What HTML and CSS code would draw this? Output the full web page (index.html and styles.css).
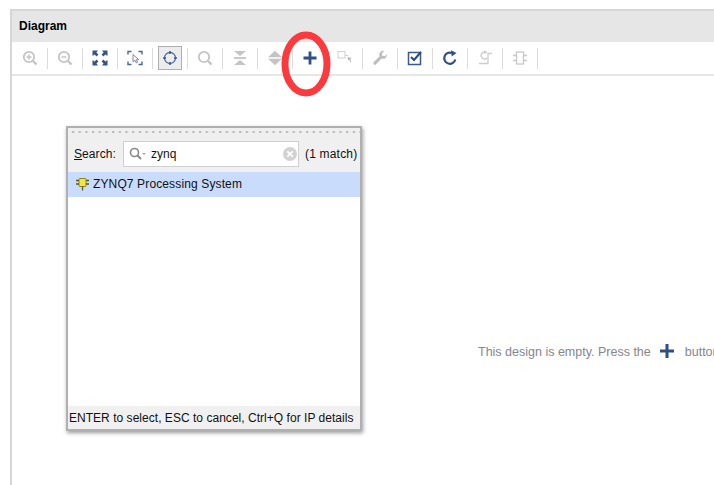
FILE: index.html
```html
<!DOCTYPE html>
<html lang="en">
<head>
<meta charset="utf-8">
<title>Diagram</title>
<link rel="stylesheet" href="styles.css">
</head>
<body>
<main class="panel">
  <header class="title">Diagram</header>
  <div class="toolbar">
    <span class="tool"><svg class="ico" viewBox="0 0 16 16"><circle cx="7" cy="7" r="5.2" fill="none" stroke="#c4c4c4" stroke-width="1.8"/><path d="M4.5 7h5M7 4.5v5" stroke="#c4c4c4" stroke-width="1.5"/><path d="M11 11l3.5 3.5" stroke="#c4c4c4" stroke-width="2.4"/></svg></span>
    <span class="tool"><svg class="ico" viewBox="0 0 16 16"><circle cx="7" cy="7" r="5.2" fill="none" stroke="#c4c4c4" stroke-width="1.8"/><path d="M4.5 7h5" stroke="#c4c4c4" stroke-width="1.5"/><path d="M11 11l3.5 3.5" stroke="#c4c4c4" stroke-width="2.4"/></svg></span>
    <span class="tool"><svg class="ico" viewBox="0 0 16 16"><path d="M.5.500h5.500L4.400 2.600 6.400 4.600 4.600 6.400 2.600 4.400 .5 6zM15.500.500V6L13.400 4.400 11.400 6.400 9.600 4.600 11.600 2.600 10 .5zM.5 15.500V10L2.600 11.600 4.600 9.600 6.400 11.400 4.400 13.400 6 15.500zM15.500 15.500H10L11.600 13.400 9.600 11.400 11.400 9.600 13.400 11.600 15.500 10z" fill="#355585"/></svg></span>
    <span class="tool"><svg class="ico" viewBox="0 0 16 16"><path d="M1 4.500V1.500h3.500M11.500 1.500H15v3M15 11.500v3h-3.500M4.500 14.500H1v-3" fill="none" stroke="#4a6794" stroke-width="1.400"/><path d="M6 4.500v7.500l2-1.800 1.400 2.800 1.200-.6-1.300-2.700h2.500z" fill="#fff" stroke="#7c8ca6"/></svg></span>
    <span class="tool on"><svg class="ico" viewBox="0 0 16 16"><circle cx="8" cy="8" r="5.500" fill="none" stroke="#4a6c9e" stroke-width="1.300"/><path d="M8 1v3M8 12v3M1 8h3M12 8h3" stroke="#3b5a8c" stroke-width="1.500"/></svg></span>
    <span class="tool"><svg class="ico" viewBox="0 0 16 16"><circle cx="7" cy="7" r="5.200" fill="none" stroke="#c4c4c4" stroke-width="1.800"/><path d="M11 11l3.500 3.500" stroke="#c4c4c4" stroke-width="2.400"/></svg></span>
    <span class="tool"><svg class="ico" viewBox="0 0 16 16"><path d="M2 7.500h12M2 8.500h12" stroke="#c8c8c8"/><path d="M2 1h12L8 6zM2 15h12L8 10z" fill="#c4c4c4"/></svg></span>
    <span class="tool"><svg class="ico" viewBox="0 0 16 16"><path d="M1 7.200L8 .8l7 6.400zM1 8.800h14l-7 6.400z" fill="#c4c4c4"/></svg></span>
    <span class="tool"><svg class="ico" viewBox="0 0 16 16"><path d="M8 1.500v13M1.500 8h13" stroke="#2f4f85" stroke-width="2.800"/></svg></span>
    <span class="tool"><svg class="ico" viewBox="0 0 16 16"><rect x="1" y="1.500" width="7" height="6.500" fill="#fff" stroke="#cfcfcf"/><path d="M8 5.500h3" stroke="#cfcfcf"/><path d="M10.500 7l4 1-1.200 1.200 1 2.800-1 .2-1-2.800-1.300.8z" fill="#b4b4b4"/></svg></span>
    <span class="tool"><svg class="ico" viewBox="0 0 16 16"><path d="M15 4.200a4 4 0 0 1-5.400 4.300L4 14.200a1.500 1.500 0 0 1-2.200-2.200l5.700-5.600A4 4 0 0 1 12.200 1L9.800 3.400l.5 2.300 2.300.5z" fill="#bdbdbd"/></svg></span>
    <span class="tool"><svg class="ico" viewBox="0 0 16 16"><path d="M1.500 2.500h12v12h-12z" fill="none" stroke="#3b5a8c" stroke-width="1.500"/><path d="M4 7l3 3 7-8" fill="none" stroke="#2a4a7c" stroke-width="2"/></svg></span>
    <span class="tool"><svg class="ico" viewBox="0 0 16 16"><path d="M13.300 9.500A5.600 5.600 0 1 1 10 3" fill="none" stroke="#2f5080" stroke-width="2.200"/><path d="M9 .3l5.500 2.700-4.800 3.500z" fill="#2f5080"/></svg></span>
    <span class="tool"><svg class="ico" viewBox="0 0 16 16"><path d="M10 8a3.500 3.500 0 1 1-2-6" fill="none" stroke="#cdcdcd" stroke-width="1.500"/><path d="M7 .2l3.500 1.800-3 2.200z" fill="#cdcdcd"/><path d="M2 13.500h9V3.500h4" fill="none" stroke="#cdcdcd" stroke-width="1.300"/></svg></span>
    <span class="tool"><svg class="ico" viewBox="0 0 16 16"><rect x="4.500" y="2" width="7" height="12" fill="#fff" stroke="#c8c8c8" stroke-width="1.300"/><path d="M1 5.500h3.500M1 10.500h3.500M11.500 5.500H15M11.500 10.500H15" stroke="#c8c8c8" stroke-width="1.300"/></svg></span>
  </div>
  <section class="canvas">
    <p class="hint">This design is empty. Press the
      <svg class="hint-plus" viewBox="0 0 16 16"><path d="M8 1v14M1 8h14" stroke="#2f4f85" stroke-width="3"/></svg>
      button</p>
  </section>
</main>

<aside class="popup">
  <div class="grip"></div>
  <div class="search">
    <label class="search-label"><u>S</u>earch:</label>
    <div class="field">
      <svg class="field-ico" viewBox="0 0 18 14"><circle cx="5.500" cy="5.500" r="4" fill="none" stroke="#8a8a8a" stroke-width="1.600"/><path d="M8.500 8.500l3.500 3.500" stroke="#8a8a8a" stroke-width="2"/><path d="M13 6h4l-2 2z" fill="#a8a8a8"/></svg>
      <span class="query">zynq</span>
      <svg class="clear" viewBox="0 0 14 14"><circle cx="7" cy="7" r="7" fill="#d2d2d2"/><path d="M4.300 4.300l5.400 5.400M9.700 4.300l-5.400 5.400" stroke="#fff" stroke-width="1.800"/></svg>
    </div>
    <span class="count">(1 match)</span>
  </div>
  <div class="list">
    <div class="row">
      <svg class="chip" viewBox="0 0 14 14"><rect x="4" y="1.500" width="7" height="8" rx="1" fill="#f5e63c" stroke="#8a8420"/><path d="M1 3.500h3M1 7h3M11 3.500h3M11 7h3M7.500 9.500v4" stroke="#5e5a20" stroke-width="1.300"/></svg>
      <span class="row-name">ZYNQ7 Processing System</span>
    </div>
  </div>
  <footer class="foot">ENTER to select, ESC to cancel, Ctrl+Q for IP details</footer>
</aside>

<svg class="mark" viewBox="0 0 50 66"><ellipse cx="25" cy="33" rx="21" ry="29" fill="none" stroke="#fb3a3e" stroke-width="7"/></svg>
</body>
</html>
```

FILE: styles.css
```css
html, body {
  margin: 0;
  height: 100%;
  overflow: hidden;
  background: #fff;
}
body {
  font-family: "Liberation Sans", Arial, sans-serif;
  font-size: 12px;
  color: #111;
  padding: 9px 0 0 10px;
  box-sizing: border-box;
}
.panel {
  height: 100%;
  display: flex;
  flex-direction: column;
  border-left: 2px solid #d6d6d6;
  border-top: 2px solid #d6d6d6;
}
.title {
  height: 29px;
  flex: none;
  display: flex;
  align-items: center;
  padding: 0 0 2px 7px;
  background: #e6e6e6;
  font-weight: bold;
  color: #000;
}
.toolbar {
  height: 32px;
  flex: none;
  display: flex;
  align-items: center;
  padding-left: 1px;
  border-bottom: 2px solid #e6e6e6;
}
.tool {
  width: 34px;
  height: 21px;
  flex: none;
  display: flex;
  align-items: center;
  justify-content: center;
  border-right: 1px solid #dcdcdc;
}
.tool.on {
  position: relative;
}
.tool.on::before {
  content: "";
  position: absolute;
  left: 5px;
  top: -2px;
  width: 22px;
  height: 22px;
  border: 1px solid #b0b0b0;
  background: #ececec;
}
.ico {
  width: 16px;
  height: 16px;
  position: relative;
}
.canvas {
  flex: 1;
  display: flex;
  align-items: flex-start;
  padding: 268px 0 0 466px;
  min-width: 0;
  overflow: hidden;
}
.hint {
  margin: 0;
  white-space: nowrap;
  font-size: 12.5px;
  color: #85858f;
  display: flex;
  align-items: center;
  gap: 8px;
  height: 16px;
}
.hint-plus {
  width: 16px;
  height: 16px;
  margin: -2px 2px 0 0;
}
.popup {
  position: absolute;
  left: 66px;
  top: 126px;
  width: 292px;
  height: 301px;
  display: flex;
  flex-direction: column;
  background: #fff;
  border: 2px solid #b0b0b0;
  box-shadow: 1px 2px 4px rgba(0, 0, 0, .4);
}
.grip {
  height: 10px;
  flex: none;
  background: radial-gradient(circle at 3px 3px, #bbb 1.200px, transparent 1.500px) 2px 1px / 6.700px 10px repeat-x #efefef;
}
.search {
  height: 32px;
  flex: none;
  display: flex;
  align-items: center;
  gap: 6px;
  padding: 0 0 2px 6px;
  background: #f0f0f0;
  letter-spacing: .08px;
}
.search-label {
  flex: none;
  margin-right: 1px;
}
.field {
  width: 168px;
  height: 24px;
  flex: none;
  display: flex;
  align-items: center;
  padding: 0 1px 0 5px;
  background: #fff;
  border: 1px solid #d0d0d0;
}
.field-ico {
  width: 18px;
  height: 14px;
  flex: none;
}
.query {
  flex: 1;
  margin-left: 4px;
}
.clear {
  width: 14px;
  height: 14px;
  flex: none;
}
.count {
  flex: none;
  white-space: nowrap;
  letter-spacing: .2px;
}
.list {
  flex: 1;
  background: #fff;
}
.row {
  height: 25px;
  display: flex;
  align-items: center;
  gap: 4px;
  padding: 0 0 1px 7px;
  box-sizing: border-box;
  background: #c9dcfb;
}
.row-name {
  letter-spacing: .13px;
}
.chip {
  width: 14px;
  height: 14px;
  flex: none;
}
.foot {
  height: 23px;
  flex: none;
  display: flex;
  align-items: center;
  padding-left: 1px;
  background: #f0f0f0;
  white-space: nowrap;
  letter-spacing: .03px;
}
.mark {
  position: absolute;
  left: 281px;
  top: 31px;
  width: 50px;
  height: 66px;
}
```
